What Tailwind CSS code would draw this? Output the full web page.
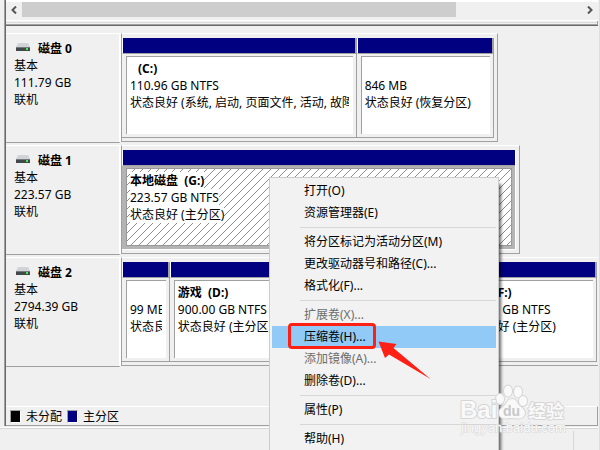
<!DOCTYPE html>
<html lang="zh-CN">
<head>
<meta charset="utf-8">
<title>磁盘管理</title>
<script src="https://cdn.jsdelivr.net/npm/@tailwindcss/browser@4"></script>
</head>
<body class="relative h-screen overflow-hidden bg-[#f0f0f0] font-['Noto_Sans','Noto_Sans_CJK_SC',sans-serif] text-[12px] leading-[17px] whitespace-nowrap text-black">
<svg class="absolute h-0 w-0" aria-hidden="true">
  <defs>
    <pattern id="hatch" width="8" height="8" patternUnits="userSpaceOnUse"><path d="M-1 9 9-1M-1 1 1-1M7 9 9 7" stroke="#8c8c8c" stroke-width="1"/></pattern>
    <symbol id="drive" viewBox="0 0 14 10"><path d="M2 1h10l2 4H0z" fill="#d0d3d8"/><path d="M0 5h14v4H0z" fill="#45484a"/><path d="M0 5h14v1H0z" fill="#777b7e"/><path d="M10 6h2v2h-2z" fill="#3df04a"/></symbol>
  </defs>
</svg>
<div class="flex h-screen flex-col overflow-hidden border-r border-[#dedede] pr-px pl-1">
  <main class="flex shrink-0 flex-col border-l border-[#a0a0a0]">
    <div class="flex flex-col border-l border-[#696969]">
      <div class="flex h-[17px] items-stretch border-t-2 border-white">
        <button aria-label="向左滚动" class="flex w-4 items-center justify-center"><svg class="h-2 w-2" viewBox="0 0 8 8" fill="none" stroke="#555" stroke-width="2"><path d="M6 .5 2.500 4 6 7.500"/></svg></button>
        <div class="flex grow"><div class="w-[77.5%] bg-[#cdcdcd]"></div></div>
        <button aria-label="向右滚动" class="flex w-4 items-center justify-center"><svg class="h-2 w-2" viewBox="0 0 8 8" fill="none" stroke="#555" stroke-width="2"><path d="M2 .5 5.500 4 2 7.500"/></svg></button>
      </div>
      <div class="mt-[3px] h-[6px] border-t border-b border-t-white border-b-[#696969]">
        <div class="h-1 border-r border-b border-[#a0a0a0] pt-px"><div class="h-px bg-[#dcdcdc]"></div></div>
      </div>

      <div class="flex flex-col gap-[2px] pt-[7px]">
        <section class="flex h-[110px]">
          <div class="w-[115px] shrink-0 border-t border-r-2 border-b border-t-white border-r-white border-b-[#a0a0a0] pt-[6px] pl-2">
            <h2 class="flex items-center gap-2 font-bold"><svg class="mb-1 ml-[2px] h-[10px] w-[14px]"><use href="#drive"/></svg>磁盘 0</h2>
            <p>基本</p><p>111.79 GB</p><p>联机</p>
          </div>
          <div class="min-w-0 flex-1">
            <div class="flex h-[109px] w-[79%] border border-t-white border-r-[#a0a0a0] border-b-[#a0a0a0] border-l-[#a0a0a0] pt-1 pr-[3px]">
              <article class="flex h-[100px] min-w-0 flex-[235] flex-col border-r border-b border-[#a0a0a0]">
                <div class="h-4 border-r border-b border-l border-r-[#a0a0a0] border-b-[#a0a0a0] border-l-white bg-[#000080]"></div>
                <div class="mt-[2px] mr-[3px] mb-[3px] ml-1 grow overflow-hidden border-t border-l border-[#a0a0a0] bg-white pt-[3px] pr-1 pl-[3px]">
                  <div class="overflow-hidden"><h3 class="pl-2 font-bold">(C:)</h3><p>110.96 GB NTFS</p><p>状态良好 (系统, 启动, 页面文件, 活动, 故障转储, 主分区)</p></div>
                </div>
              </article>
              <article class="flex h-[100px] min-w-0 flex-[137] flex-col border-r border-b border-[#a0a0a0]">
                <div class="h-4 border-r border-b border-l border-r-[#a0a0a0] border-b-[#a0a0a0] border-l-white bg-[#000080]"></div>
                <div class="mt-[2px] mr-[3px] mb-[3px] ml-1 grow overflow-hidden border-t border-l border-[#a0a0a0] bg-white pt-5 pr-1 pl-[3px]"><p>846 MB</p><p>状态良好 (恢复分区)</p></div>
              </article>
            </div>
          </div>
        </section>

        <section class="flex h-[110px]">
          <div class="w-[115px] shrink-0 border-t border-r-2 border-b border-t-white border-r-white border-b-[#a0a0a0] pt-[6px] pl-2">
            <h2 class="flex items-center gap-2 font-bold"><svg class="mb-1 ml-[2px] h-[10px] w-[14px]"><use href="#drive"/></svg>磁盘 1</h2>
            <p>基本</p><p>223.57 GB</p><p>联机</p>
          </div>
          <div class="min-w-0 flex-1">
            <div class="flex h-[109px] w-[83.6%] border border-t-white border-r-[#a0a0a0] border-b-[#a0a0a0] border-l-[#a0a0a0] pt-1 pr-[3px]">
              <article class="flex h-[100px] min-w-0 flex-1 flex-col border-r border-b border-white bg-[#b4b4b4]">
                <div class="h-4 border-b border-l border-b-[#a0a0a0] border-l-white bg-[#000080]"></div>
                <div class="relative mt-[2px] mr-[3px] mb-[3px] ml-1 grow overflow-hidden border border-[#999999] bg-white pt-[3px] pl-[3px]">
                  <svg class="absolute inset-0 h-full w-full" aria-hidden="true"><rect width="100%" height="100%" fill="url(#hatch)"/></svg>
                  <div class="relative flex flex-col items-start"><h3 class="bg-white font-bold whitespace-pre">本地磁盘  (G:)</h3><p class="bg-white">223.57 GB NTFS</p><p class="bg-white">状态良好 (主分区)</p></div>
                </div>
              </article>
            </div>
          </div>
        </section>

        <section class="flex h-[110px]">
          <div class="w-[115px] shrink-0 border-t border-r-2 border-b border-t-white border-r-white border-b-[#a0a0a0] pt-[6px] pl-2">
            <h2 class="flex items-center gap-2 font-bold"><svg class="mb-1 ml-[2px] h-[10px] w-[14px]"><use href="#drive"/></svg>磁盘 2</h2>
            <p>基本</p><p>2794.39 GB</p><p>联机</p>
          </div>
          <div class="min-w-0 flex-1">
            <div class="flex h-[109px] border-t border-b border-l border-t-white border-b-[#a0a0a0] border-l-[#a0a0a0] pt-1 pr-px">
              <article class="flex h-[100px] min-w-0 flex-[47] flex-col border-r border-b border-[#a0a0a0]">
                <div class="h-4 border-r border-b border-l border-r-[#a0a0a0] border-b-[#a0a0a0] border-l-white bg-[#000080]"></div>
                <div class="mt-[2px] mr-[3px] mb-[3px] ml-1 grow overflow-hidden border-t border-l border-[#a0a0a0] bg-white pt-5 pr-1 pl-[3px]"><div class="overflow-hidden"><p>99 MB</p><p>状态良好 (恢复分区)</p></div></div>
              </article>
              <article class="flex h-[100px] min-w-0 flex-[284] flex-col border-r border-b border-[#a0a0a0]">
                <div class="h-4 border-r border-b border-l border-r-[#a0a0a0] border-b-[#a0a0a0] border-l-white bg-[#000080]"></div>
                <div class="mt-[2px] mr-[3px] mb-[3px] ml-1 grow overflow-hidden border-t border-l border-[#a0a0a0] bg-white pt-[3px] pr-1 pl-[3px]"><h3 class="font-bold whitespace-pre">游戏  (D:)</h3><p>900.00 GB NTFS</p><p>状态良好 (主分区)</p></div>
              </article>
              <article class="flex h-[100px] min-w-0 flex-[143] flex-col border-r border-b border-[#a0a0a0]">
                <div class="h-4 border-r border-b border-l border-r-[#a0a0a0] border-b-[#a0a0a0] border-l-white bg-[#000080]"></div>
                <div class="mt-[2px] mr-[3px] mb-[3px] ml-1 grow overflow-hidden border-t border-l border-[#a0a0a0] bg-white pt-[3px] pr-1 pl-[3px]"><h3 class="pl-8 font-bold">(F:)</h3><p>900.00 GB NTFS</p><p>状态良好 (主分区)</p></div>
              </article>
            </div>
          </div>
        </section>
      </div>

      <footer class="mt-[39px] flex h-5 items-center border-t border-r border-b border-t-white border-r-[#a0a0a0] border-b-[#a0a0a0] pl-1">
        <span class="h-[13px] w-[11px] border border-t-[#a0a0a0] border-r-white border-b-white border-l-[#a0a0a0] bg-black"></span><span class="ml-[5px]">未分配</span>
        <span class="ml-[5px] h-[13px] w-[11px] border border-t-[#a0a0a0] border-r-white border-b-white border-l-[#a0a0a0] bg-[#000080]"></span><span class="ml-[5px]">主分区</span>
      </footer>
    </div>
  </main>
  <div class="mt-[2px] -ml-1 flex grow justify-end border-t border-[#d7d7d7] shadow-[0_-1px_0_white] pt-[2px] pr-6"><div class="w-px bg-[#d7d7d7]"></div></div>
</div>

<div role="menu" class="absolute top-[177px] bottom-0 left-[269px] flex w-[230px] flex-col overflow-hidden border border-b-0 border-[#cccccc] bg-[#f2f2f2] p-[2px] pb-0 shadow-[4px_5px_3px_-2px_rgba(0,0,0,0.6)]">
  <button role="menuitem" class="h-[22px] shrink-0 pb-[2px] pl-8 text-left">打开(O)</button>
  <button role="menuitem" class="h-[22px] shrink-0 pb-[2px] pl-8 text-left">资源管理器(E)</button>
  <hr class="my-[3px] ml-7 border-[#d7d7d7]">
  <button role="menuitem" class="h-[22px] shrink-0 pb-[2px] pl-8 text-left">将分区标记为活动分区(M)</button>
  <button role="menuitem" class="h-[22px] shrink-0 pb-[2px] pl-8 text-left">更改驱动器号和路径(C)...</button>
  <button role="menuitem" class="h-[22px] shrink-0 pb-[2px] pl-8 text-left">格式化(F)...</button>
  <hr class="my-[3px] ml-7 border-[#d7d7d7]">
  <button role="menuitem" disabled class="h-[22px] shrink-0 pb-[2px] pl-8 text-left text-[#6d6d6d]">扩展卷(X)...</button>
  <button role="menuitem" class="relative h-[22px] shrink-0 bg-[#91c9f7] pb-[2px] pl-8 text-left">压缩卷(H)...<span class="absolute -top-[3px] left-4 h-[26px] w-[88px] rounded-[4px] border-3 border-[#ff2015]"></span></button>
  <button role="menuitem" disabled class="h-[22px] shrink-0 pb-[2px] pl-8 text-left text-[#6d6d6d]">添加镜像(A)...</button>
  <button role="menuitem" class="h-[22px] shrink-0 pb-[2px] pl-8 text-left">删除卷(D)...</button>
  <hr class="my-[3px] ml-7 border-[#d7d7d7]">
  <button role="menuitem" class="h-[22px] shrink-0 pb-[2px] pl-8 text-left">属性(P)</button>
  <hr class="my-[3px] ml-7 border-[#d7d7d7]">
  <button role="menuitem" class="h-[22px] shrink-0 pb-[2px] pl-8 text-left">帮助(H)</button>
</div>

<svg class="absolute top-[340px] left-[377px] h-10 w-[54px]" viewBox="0 0 54 40" aria-hidden="true"><path d="M1.500 1.500 19.500 4 16.500 8 53.500 39 12 14.500 8 18z" fill="#ff2015"/></svg>

<svg class="absolute top-[382px] left-[456px] h-14 w-[114px]" viewBox="0 0 114 56" aria-hidden="true" fill="#f9f9f9" stroke="#d6d6d6" stroke-width="2" paint-order="stroke" stroke-linejoin="round">
  <ellipse cx="44" cy="17" rx="4" ry="5"/><ellipse cx="52" cy="9" rx="4" ry="5.500"/><ellipse cx="62" cy="10" rx="4" ry="5.500"/><ellipse cx="67" cy="19" rx="4" ry="5"/>
  <path d="M56 17c-5 0-5 5-9 8-4 3-5 6-3 9 3 4 8 2 12 2s9 2 12-2c2-3 1-6-3-9-4-3-4-8-9-8z"/>
  <text x="4" y="36" font-family="Liberation Sans" font-weight="700" font-size="24">Bai</text>
  <text x="47" y="34" font-family="Liberation Sans" font-weight="700" font-size="14" fill="#c8c8c8" stroke="#f9f9f9" stroke-width="1">du</text>
  <text x="72" y="36" font-family="Noto Sans CJK SC" font-weight="700" font-size="18">经验</text>
  <text x="5" y="50" font-family="Liberation Sans" font-size="13" stroke-width="1">jingyan.baidu.com</text>
</svg>
</body>
</html>
